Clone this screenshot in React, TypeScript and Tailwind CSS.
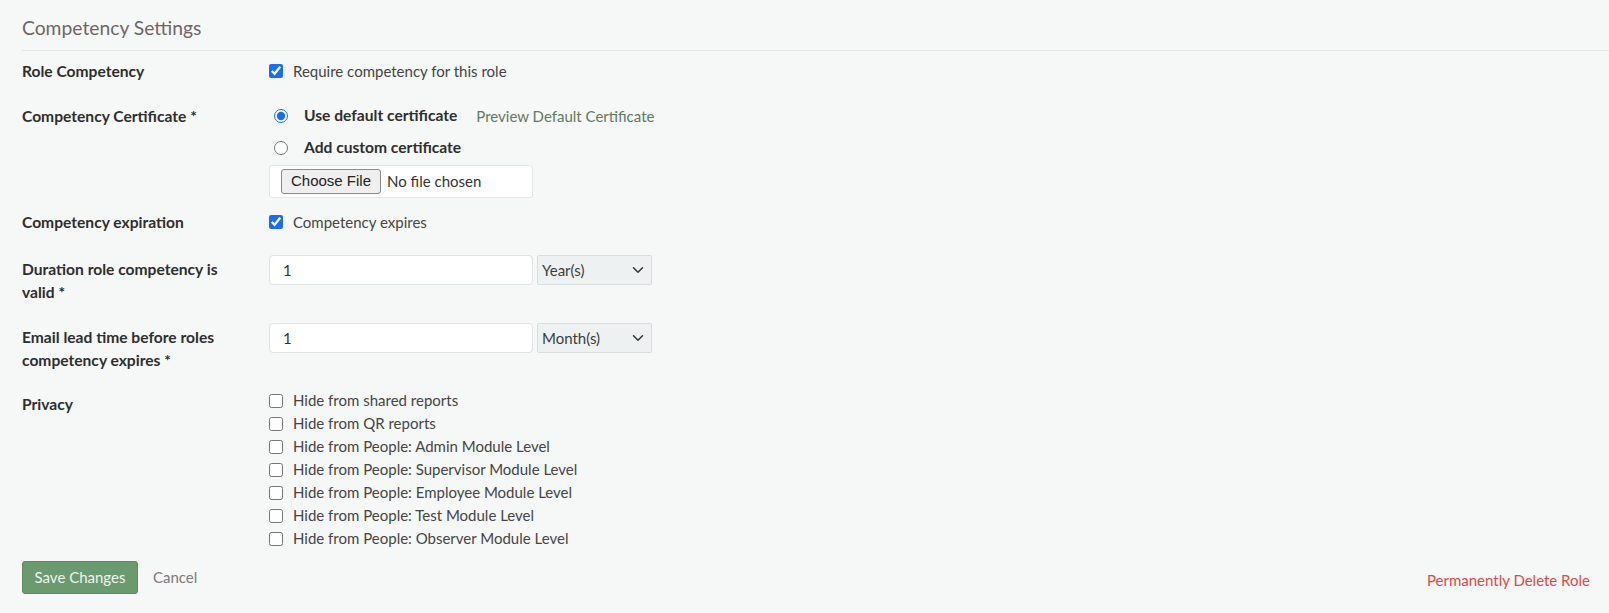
import { ChevronDown } from 'lucide-react';

const font = { fontFamily: 'Lato, "Open Sans", sans-serif' };

const privacyOptions = [
  'Hide from shared reports',
  'Hide from QR reports',
  'Hide from People: Admin Module Level',
  'Hide from People: Supervisor Module Level',
  'Hide from People: Employee Module Level',
  'Hide from People: Test Module Level',
  'Hide from People: Observer Module Level',
];

function Label({ children, className = '' }: { children: React.ReactNode; className?: string }) {
  return (
    <div className={`w-[247px] shrink-0 pr-4 text-[15.6px] font-bold leading-[23px] text-[#2e2e2e] ${className}`}>
      {children}
    </div>
  );
}

function UnitSelect({ value }: { value: string }) {
  return (
    <div className="relative ml-[4px]">
      <select
        defaultValue={value}
        className="h-[30px] w-[115px] appearance-none rounded-[2px] border border-[#d8dede] bg-[#edf1f1] pl-[4px] text-[15px] text-[#3c3c3c] outline-none"
        style={font}
      >
        <option>Day(s)</option>
        <option>Week(s)</option>
        <option>Month(s)</option>
        <option>Year(s)</option>
      </select>
      <ChevronDown
        className="pointer-events-none absolute right-[5px] top-[6px] h-[18px] w-[18px] text-[#333]"
        strokeWidth={2}
      />
    </div>
  );
}

export default function App() {
  return (
    <div className="min-h-[613px] w-full bg-[#f6f7f7] pl-[22px] text-[15px] text-[#454545]" style={font}>
      <div className="border-b border-[#e2e5e5] pb-[8px] pt-[14px]">
        <h2 className="text-[19.3px] leading-[28px] text-[#6e6666]">Competency Settings</h2>
      </div>

      {/* Role Competency */}
      <div className="mt-[9px] flex">
        <Label className="leading-[22px]">Role Competency</Label>
        <label className="flex h-[22px] items-center gap-[10px]">
          <input type="checkbox" defaultChecked className="m-0 h-[14px] w-[14px] accent-[#1a6ff0]" />
          <span>Require competency for this role</span>
        </label>
      </div>

      {/* Certificate */}
      <div className="mt-[18px] flex">
        <Label className="pt-[4px] leading-[22px]">Competency Certificate *</Label>
        <div className="flex flex-col">
          <label className="flex h-[30px] items-center">
            <input type="radio" name="cert" defaultChecked className="m-0 ml-[5px] h-[14px] w-[14px] accent-[#1a6ff0]" />
            <span className="ml-[16px] text-[15.6px] font-bold text-[#2e2e2e]">Use default certificate</span>
            <a className="ml-[19px] text-[#5f7b62]">Preview Default Certificate</a>
          </label>
          <label className="mt-[1px] flex h-[31px] items-center">
            <input type="radio" name="cert" className="m-0 ml-[5px] h-[14px] w-[14px]" />
            <span className="ml-[16px] text-[15.6px] font-bold text-[#2e2e2e]">Add custom certificate</span>
          </label>
          <div className="mt-[2px] flex h-[33px] w-[264px] items-center rounded-[3px] border border-[#e3e6e6] bg-white pl-[11px]">
            <button
              className="h-[25px] rounded-[3px] border border-[#8a8a8a] bg-[#efefef] px-[9px] text-[15px] text-[#222]"
              style={{ fontFamily: '"Liberation Sans", Arial, sans-serif' }}
            >
              Choose File
            </button>
            <span className="ml-[6px] text-[#333]">No file chosen</span>
          </div>
        </div>
      </div>

      {/* Expiration */}
      <div className="mt-[13px] flex">
        <Label className="leading-[22px]">Competency expiration</Label>
        <label className="flex h-[22px] items-center gap-[10px]">
          <input type="checkbox" defaultChecked className="m-0 h-[14px] w-[14px] accent-[#1a6ff0]" />
          <span>Competency expires</span>
        </label>
      </div>

      {/* Duration */}
      <div className="mt-[21px] flex">
        <Label className="pt-[3px]">
          Duration role competency is
          <br />
          valid *
        </Label>
        <div className="flex items-start">
          <input
            defaultValue="1"
            className="h-[30px] w-[264px] rounded-[4px] border border-[#dfe3e3] bg-white pl-[13px] text-[15px] text-[#333] outline-none"
            style={font}
          />
          <UnitSelect value="Year(s)" />
        </div>
      </div>

      {/* Email lead time */}
      <div className="mt-[19px] flex">
        <Label className="pt-[3px]">
          Email lead time before roles
          <br />
          competency expires *
        </Label>
        <div className="flex items-start">
          <input
            defaultValue="1"
            className="h-[30px] w-[264px] rounded-[4px] border border-[#dfe3e3] bg-white pl-[13px] text-[15px] text-[#333] outline-none"
            style={font}
          />
          <UnitSelect value="Month(s)" />
        </div>
      </div>

      {/* Privacy */}
      <div className="mt-[17px] flex">
        <Label className="pt-[4px] leading-[22px]">Privacy</Label>
        <div className="flex flex-col">
          {privacyOptions.map((opt) => (
            <label key={opt} className="flex h-[23px] items-center gap-[10px]">
              <input type="checkbox" className="m-0 h-[14px] w-[14px]" />
              <span>{opt}</span>
            </label>
          ))}
        </div>
      </div>

      {/* Footer */}
      <div className="mt-[11px] flex items-center pr-[19px]">
        <button className="h-[33px] w-[116px] rounded-[3px] border border-[#5a8a5e] bg-[#6a9a6e] text-[15px] text-[#eef5ee]">
          Save Changes
        </button>
        <a className="ml-[15px] text-[#7b7b7b]">Cancel</a>
        <a className="ml-auto mt-[6px] text-[#dc4b4b]">Permanently Delete Role</a>
      </div>
    </div>
  );
}
